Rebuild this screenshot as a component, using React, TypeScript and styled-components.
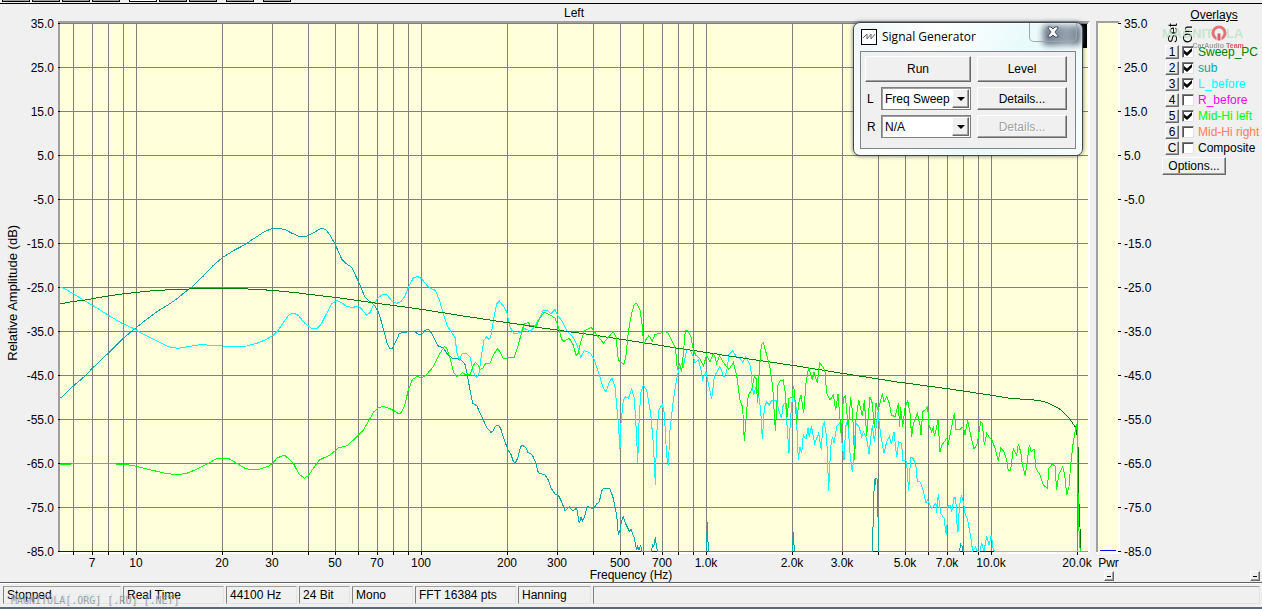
import React, { useState } from "react";
import styled, { createGlobalStyle } from "styled-components";

const GlobalStyle = createGlobalStyle`
  *, *::before, *::after { box-sizing: border-box; }
  html, body { margin: 0; background: #f0f0f0; }
  body, button, select, input {
    font-family: "Liberation Sans", Arial, sans-serif;
    font-size: 12px;
    color: #000;
  }
`;

/* ---------- page frame ---------- */

const Page = styled.div`
  position: relative;
  display: flex;
  flex-direction: column;
  min-height: 100vh;
  overflow: hidden;
  background: #f0f0f0;
`;

const Toolbar = styled.div`
  display: flex;
  gap: 2px;
  height: 4px;
  padding: 0 2px 1px;
  border-bottom: 1px solid #000;
`;

const ToolButton = styled.button<{ $active?: boolean; $gap?: boolean }>`
  width: 28px;
  height: 2px;
  padding: 0;
  margin-left: ${(p) => (p.$gap ? 7 : 0)}px;
  border: 1px solid #000;
  border-top: 0;
  background: ${(p) => (p.$active ? "#fff" : "#a0a0a0")};
`;

const Main = styled.main`
  flex: 1;
  display: grid;
  grid-template-columns: 60px minmax(0, 1fr) 6px 24px 42px 100px;
  grid-template-rows: 17px minmax(400px, 1fr) 30px;
`;

const ChartTitle = styled.h1`
  grid-area: 1 / 2;
  margin: 0;
  padding: 2px 2px 0 0;
  text-align: center;
  font-size: 12px;
  font-weight: 400;
  line-height: 14px;
`;

const LeftAxis = styled.svg`
  grid-area: 2 / 1;
  width: 100%;
  height: calc(100% - 2px);
  margin-top: 2px;
  overflow: visible;
`;

const RightAxis = styled(LeftAxis)`
  grid-area: 2 / 5;
`;

const BottomAxis = styled.svg`
  grid-area: 3 / 2;
  width: calc(100% - 2px);
  height: 30px;
  overflow: visible;
`;

const PlotFrame = styled.div`
  grid-area: 2 / 2;
  min-height: 0;
  border-top: 2px solid #a0a0a0;
  border-right: 2px solid #fff;
  background: #ffffdc;
`;

const PlotSvg = styled.svg`
  display: block;
  width: 100%;
  height: 100%;
`;

const Meter = styled.div`
  grid-area: 2 / 4;
  display: flex;
  align-items: flex-end;
  padding: 0 2px 1px;
  border: 2px solid #a0a0a0;
  border-right-color: #fff;
  border-bottom: 0;
  background: #ffffdc;
`;

const MeterLevel = styled.div`
  flex: 1;
  height: 1px;
  background: #00f;
`;

const MeterFoot = styled.div`
  grid-area: 3 / 4;
  display: flex;
  flex-direction: column;
  align-items: center;
  border-top: 2px solid #fff;
  line-height: 16px;
  padding: 1px 0 0 1px;
`;

const OverlayFoot = styled.div`
  grid-area: 3 / 6;
  display: flex;
  justify-content: flex-end;
  align-items: flex-end;
  padding: 0 2px 1px 0;
`;

const Raised = styled.button`
  padding: 0;
  background: #f0f0f0;
  border: 1px solid;
  border-color: #fff #696969 #696969 #fff;
  box-shadow: inset -1px -1px 0 #a0a0a0;
  white-space: nowrap;
`;

const MinusButton = styled(Raised)`
  display: flex;
  align-items: center;
  justify-content: center;
  flex: none;
  width: 10px;
  height: 10px;

  &::before {
    content: "";
    width: 4px;
    height: 1px;
    background: #000;
  }
`;

/* ---------- overlays panel ---------- */

const Overlays = styled.aside`
  grid-area: 1 / 6 / 3 / 7;
  position: relative;
  padding-top: 4px;
`;

const OverlayTitle = styled.h2`
  margin: 0 0 1px;
  padding-left: 4px;
  text-align: center;
  font-size: 12px;
  font-weight: 400;
  line-height: 14px;
  text-decoration: underline;
`;

const ColumnHeads = styled.div`
  display: flex;
  height: 20px;
  padding-left: 4px;
  gap: 1px;
`;

const ColumnHead = styled.span`
  width: 14px;
  writing-mode: vertical-rl;
  transform: rotate(180deg);
  font-size: 13px;
  line-height: 14px;
`;

const OverlayList = styled.ul`
  margin: 0;
  padding: 1px 0 0 3px;
  list-style: none;
`;

const OverlayRow = styled.li`
  display: flex;
  align-items: center;
  gap: 3px;
  height: 16px;
`;

const SetButton = styled(Raised)`
  width: 14px;
  height: 14px;
  line-height: 12px;
`;

const CheckLabel = styled.label<{ $color: string }>`
  display: flex;
  align-items: center;
  gap: 4px;
  color: ${(p) => p.$color};
  white-space: nowrap;
`;

const Check = styled.input`
  appearance: none;
  display: grid;
  place-items: center;
  width: 12px;
  height: 12px;
  margin: 0;
  background: #fff;
  border: 1px solid;
  border-color: #808080 #e3e3e3 #e3e3e3 #808080;
  box-shadow: inset 1px 1px 0 #505050;

  &:checked::after {
    content: "";
    width: 8px;
    height: 8px;
    background: #000;
    clip-path: polygon(0 25%, 38% 55%, 100% 0, 100% 42%, 38% 100%, 0 70%);
  }
`;

const OptionsButton = styled(Raised)`
  width: 64px;
  height: 18px;
  margin-top: 1px;
  line-height: 14px;
`;

const Logo = styled.svg`
  position: absolute;
  top: 13px;
  left: 0;
  width: 84px;
  height: 34px;
  overflow: visible;
  pointer-events: none;
`;

/* ---------- signal generator window ---------- */

const Dialog = styled.section`
  position: absolute;
  top: 22px;
  right: 179px;
  width: 230px;
  height: 134px;
  padding: 0 6px;
  border: 1px solid #3c4650;
  border-radius: 7px;
  background: linear-gradient(115deg, #eef6f7, #fff 30%, #e9fafb 62%, #f7fdfd);
  box-shadow: inset 0 0 0 1px #fff, 0 0 4px #0008;
`;

const DialogBackdrop = styled.div`
  position: absolute;
  top: 24px;
  right: 175px;
  width: 10px;
  height: 24px;
  background: #000;
`;

const DialogBar = styled.header`
  display: flex;
  align-items: center;
  gap: 5px;
  height: 28px;
  padding-left: 1px;
`;

const DialogTitle = styled.h2`
  margin: 0;
  font-family: "Open Sans", "Noto Sans", sans-serif;
  font-size: 12px;
  font-weight: 400;
  line-height: 16px;
`;

const CloseShade = styled.div`
  position: absolute;
  top: 2px;
  right: 1px;
  width: 38px;
  height: 20px;
  border-radius: 4px;
  background: linear-gradient(90deg, #4f5f70, #8795a4 65%, #566473);
  filter: blur(3px);
`;

const CloseButton = styled.button`
  position: absolute;
  top: 0;
  right: 5px;
  width: 48px;
  height: 19px;
  padding: 0;
  border: 1px solid #9aa8b4;
  border-top: 0;
  border-radius: 0 0 5px 5px;
  background: #ffffff26;

  svg { display: block; margin: 0 auto; }
`;

const DialogBody = styled.div`
  display: grid;
  grid-template-columns: 16px 90px 90px;
  grid-template-rows: 26px 23px 23px;
  row-gap: 5px;
  height: 98px;
  padding: 4px;
  border: 1px solid #808488;
  background: #f0f0f0;
  align-items: center;
`;

const PushButton = styled(Raised)<{ $wide?: boolean }>`
  grid-column: ${(p) => (p.$wide ? "1 / 3" : "3")};
  height: 100%;
  margin-left: ${(p) => (p.$wide ? 0 : 6)}px;
  margin-right: ${(p) => (p.$wide ? 0 : -6)}px;

  &:disabled {
    color: #a0a0a0;
    text-shadow: 1px 1px 0 #fff;
  }
`;

const ChannelLabel = styled.label`
  padding-left: 2px;
`;

const SelectBox = styled.div`
  position: relative;
  height: 100%;
`;

const Select = styled.select`
  appearance: none;
  width: 100%;
  height: 100%;
  padding: 0 18px 0 3px;
  border: 1px solid #808080;
  border-radius: 0;
  background: #fff;
  box-shadow: inset 1px 1px 0 #a0a0a0;
`;

const Arrow = styled.span`
  position: absolute;
  top: 2px;
  right: 2px;
  bottom: 2px;
  display: grid;
  place-items: center;
  width: 17px;
  background: #f0f0f0;
  border: 1px solid;
  border-color: #fff #696969 #696969 #fff;
  box-shadow: inset -1px -1px 0 #a0a0a0;
  pointer-events: none;

  &::after {
    content: "";
    border: 4px solid transparent;
    border-top-color: #000;
    border-bottom: 0;
  }
`;

/* ---------- status bar ---------- */

const StatusBar = styled.footer`
  position: relative;
  display: flex;
  gap: 2px;
  padding: 3px 2px 3px 3px;
  border-top: 1px solid #606060;
  border-bottom: 2px solid #5b6875;
  box-shadow: inset 0 1px 0 #fff;
`;

const StatusCell = styled.div<{ $width?: number }>`
  flex: ${(p) => (p.$width ? `0 0 ${p.$width}px` : "1")};
  height: 18px;
  padding-left: 3px;
  border: 1px solid;
  border-color: #a0a0a0 #e3e3e3 #e3e3e3 #808080;
  line-height: 16px;
  white-space: nowrap;
`;

const SiteMark = styled.span`
  position: absolute;
  left: 11px;
  bottom: 0;
  font: 10px/12px "DejaVu Sans Mono", monospace;
  color: #8a8a8acc;
  text-shadow: 1px -2px 0 #a8dbe680;
  white-space: nowrap;
  pointer-events: none;
`;

/* ---------- chart data ---------- */

const LEFT = 60;
const TOP = 23;
const WIDTH = 1028;
const HEIGHT = 529;

const freqX = (f: number) => Math.round(136 + 285 * Math.log10(f / 10));
const share = (v: number, of: number) => `${(v / of) * 100}%`;

const GRID = [1, 10, 100, 1000, 10000]
  .flatMap((d) => [1, 2, 3, 4, 5, 6, 7, 8, 9].map((n) => n * d))
  .filter((f) => f >= 6 && f <= 20000);

const FREQ_LABELS: [number, string][] = [
  [7, "7"], [10, "10"], [20, "20"], [30, "30"], [50, "50"], [70, "70"],
  [100, "100"], [200, "200"], [300, "300"], [500, "500"], [700, "700"],
  [1000, "1.0k"], [2000, "2.0k"], [3000, "3.0k"], [5000, "5.0k"],
  [7000, "7.0k"], [10000, "10.0k"], [20000, "20.0k"],
];

const LEVELS = Array.from({ length: 13 }, (_, i) => 35 - i * 10);

// Each trace is a list of sections: an origin in plot units, then x,y pairs
// on a grid three times finer.
type Section = [number, number, string];

const SWEEP: Section[] = [
  [50, 210, "28,280 40,280 70,274 100,271 150,262 200,254 260,247 320,241 400,238 450,235 560,235 630,239 668,241 748,249"],
  [290, 210, "30,250 135,262 262,280 395,298 520,318 652,338 718,347"],
  [530, 290, "0,109 190,135 340,158 445,175 568,193"],
  [720, 320, "0,104 217,136 367,160 475,177 538,187"],
  [900, 360, "0,67 142,86 275,106 330,115 415,121 445,129 478,146 508,175 528,204 533,240 535,282 537,430 540,500 541,573"],
];

const SUB: Section[] = [
  [50, 210, "28,563 36,562 44,553 60,537 71,527 90,511 106,497 127,475 160,443 180,425 200,405 220,385 240,368 260,352 290,328 325,302 350,287 380,267 400,250 425,232 460,198 490,166 517,143 550,122 583,105 605,90 640,67 667,55 690,55 710,61 720,67"],
  [290, 210, "0,67 25,78 50,78 75,66 93,55 107,58 120,75 135,102 155,147 165,158 185,172 205,214 225,262 240,275 252,284 265,305 275,338 285,375 292,402 300,416 306,417 312,405 322,385 328,370 355,365 375,365 385,373 395,373 405,361 415,358 425,370 435,390 443,407 460,414 472,432 487,445 510,448 518,455 525,463 531,490 540,540 548,580 560,587 570,608 580,630 590,652 603,667 610,662 617,648 624,645 632,655 642,687 655,722 664,735 668,750 675,760 683,745 692,710 698,706 708,714 714,728"],
  [530, 290, "0,490 8,497 16,515 25,548 45,555 55,570 62,592 75,612 83,612 95,635 105,663 118,650 128,662 140,655 148,700 153,680 158,694 165,675 172,648 190,657 200,642 208,635 215,603 222,594 240,596 250,625 260,675 265,733 270,722 274,697 280,680 285,697 298,724 303,718 312,742 320,780 323,770 327,780 332,765 335,784 365,784 367,765 371,770 376,740 380,775 383,784 529,784 532,697 535,784"],
  [720, 320, "217,694 220,637 223,694 457,694 458,660 463,478 466,496 468,475 473,478 474,590 476,694"],
  [900, 360, "178,574 182,553 187,560 189,574 215,574"],
];

const L_BEFORE: Section[] = [
  [50, 210, "28,233 38,233 68,250 100,270 127,286 160,306 180,319 220,342 250,355 275,370 300,382 330,397 355,410 385,415 420,409 455,403 480,406 517,408 550,410 590,408 620,400 645,390 668,377 685,360 705,330 718,314"],
  [290, 210, "0,313 10,309 25,316 45,340 65,355 80,357 92,345 110,310 125,282 140,271 155,278 170,290 188,292 205,289 215,297 230,316 240,308 252,282 265,262 280,253 290,254 305,272 320,280 333,275 345,258 357,228 370,204 382,199 395,206 412,228 425,237 436,241 448,270 460,312 472,348 485,368 495,382 501,430 508,450 517,430 530,430 541,443 550,487 560,502 567,490 573,445 582,390 590,380 596,388 602,382 612,320 620,282 628,273 640,288 650,305 660,350 672,372 690,368 702,355 718,362"],
  [530, 290, "0,124 10,115 25,90 40,62 52,62 62,71 75,58 82,75 95,92 110,122 130,143 143,170 152,201 163,182 180,188 192,207 205,245 220,295 228,306 238,275 246,265 255,290 265,400 270,476 273,400 280,330 287,320 295,325 305,297 313,325 320,440 323,520 327,400 332,310 340,286 350,300 362,370 370,460 376,584 380,430 387,360 397,343 403,370 410,500 415,524 420,420 430,330 440,265 446,240 455,222 460,230 470,178 480,180 490,200 495,218 505,210 512,235 518,268 528,245 535,280 545,328 553,260 568,232"],
  [720, 320, "0,140 12,172 20,155 27,103 38,92 50,112 60,115 68,127 77,110 85,125 92,140 97,200 101,225 108,200 115,220 122,270 127,358 133,265 140,245 148,255 155,240 170,240 175,265 184,295 190,253 197,250 200,300 207,398 211,300 217,235 222,230 228,260 235,420 240,380 245,400 250,345 258,358 264,325 268,352 274,318 284,370 296,340 304,390 308,320 313,308 320,350 326,512 332,380 337,350 342,370 350,320 360,308 364,350 372,420 377,320 383,300 390,400 397,457 402,400 407,310 417,320 425,350 430,335 440,355 447,402 457,315 463,365 474,277 482,345 492,400 500,365 508,350 514,372 522,335 530,412 536,365 545,370 548,420 557,420 560,430 566,514 572,412 580,415 588,440 592,485"],
  [900, 360, "60,365 68,385 78,430 82,420 95,445 108,430 109,460 115,402 122,460 132,475 138,520 140,525 143,440 150,435 155,455 162,415 167,412 172,510 174,515 178,440 184,405 190,425 195,460 203,480 212,530 218,574 227,560 232,574 240,574 245,548 252,574 260,528 267,555 274,525 280,570 285,574 541,574"],
];

const MID_LEFT: Section[] = [
  [50, 210, "28,763 62,763 66,760 195,760 200,763 225,763 260,769 300,779 345,790 380,794 410,790 440,778 475,760 500,746 535,745 560,760 585,775 605,780 630,777 655,769 668,760 680,745 695,738 705,737 715,745"],
  [290, 210, "0,750 10,760 27,792 43,805 55,797 70,775 88,750 120,735 145,714 172,707 190,690 205,675 220,660 235,635 250,607 265,593 280,589 295,594 312,602 325,611 332,609 343,590 355,540 367,509 382,499 395,505 410,493 430,470 448,433 463,410 470,413 480,445 490,485 500,500 510,496 517,488 527,494 540,495 548,470 556,457 563,463 570,478 578,475 587,460 600,459 610,436 622,416 630,425 640,447 655,443 672,443 685,405 698,355 705,340 715,338"],
  [530, 290, "0,105 18,110 28,88 42,67 55,72 75,84 85,110 95,148 102,154 118,145 130,165 138,196 145,190 153,152 163,122 183,112 193,125 203,138 220,160 232,145 250,125 258,140 265,210 282,223 288,195 295,125 305,70 313,43 320,40 330,60 337,110 341,165 347,150 357,137 367,153 375,133 390,130 405,124 415,130 430,160 437,180 442,240 448,222 455,245 460,190 466,122 473,120 483,142 490,180 497,195 510,207 520,228 530,195 540,215 550,190 555,200 560,220 568,198"],
  [720, 320, "0,110 12,130 27,148 40,128 50,165 60,240 68,262 73,364 80,270 85,225 95,210 103,168 108,175 113,250 118,150 124,75 130,68 140,105 150,145 158,200 166,332 174,195 180,182 190,180 196,220 201,292 207,235 217,230 220,198 223,210 230,312 236,250 243,225 251,280 258,190 266,142 277,180 282,155 292,190 299,128 310,143 315,155 320,220 330,240 340,225 347,270 354,222 364,350 370,235 376,228 385,325 392,232 398,280 404,420 408,300 416,240 427,288 433,240 440,348 450,230 457,250 463,325 468,250 474,270 480,250 487,220 492,245 500,230 508,250 514,285 525,290 535,250 539,322 542,262 548,320 555,265 563,242 570,280 575,350 580,310 592,280"],
  [900, 360, "60,195 63,225 68,155 75,150 83,140 87,195 95,215 100,203 103,228 108,210 114,178 120,275 126,255 140,235 145,250 155,200 163,160 168,210 180,208 190,200 195,225 203,180 212,225 222,268 232,250 242,185 247,190 253,255 260,220 268,232 276,240 285,265 295,303 302,265 312,275 320,300 325,332 332,330 340,265 350,285 355,252 362,275 367,315 376,347 388,255 394,275 402,268 408,325 420,345 430,375 442,385 447,325 457,312 465,318 470,390 476,345 480,335 488,320 494,345 500,405 507,380 512,315 518,260 522,235 526,210 530,192 532,225 534,400 536,487 539,560 543,573 560,573"],
];

const toPoints = (sections: Section[]) =>
  sections
    .flatMap(([ox, oy, pts]) =>
      pts.split(" ").map((p) => {
        const [x, y] = p.split(",").map(Number);
        return `${(ox + x / 3).toFixed(2)},${(oy + y / 3).toFixed(2)}`;
      })
    )
    .join(" ");

const TRACES = [
  { color: "#00a8a8", data: SUB },
  { color: "#00ffff", data: L_BEFORE },
  { color: "#008000", data: SWEEP },
  { color: "#00ff00", data: MID_LEFT },
];

function Plot() {
  return (
    <PlotFrame>
      <PlotSvg
        viewBox={`${LEFT} ${TOP} ${WIDTH} ${HEIGHT}`}
        preserveAspectRatio="none"
        shapeRendering="crispEdges"
        role="img"
        aria-label="Spectrum, left channel"
      >
        <g stroke="#808080">
          {LEVELS.map((l, i) => (
            <line key={l} x1={LEFT} x2={LEFT + WIDTH} y1={TOP + 0.5 + i * 44} y2={TOP + 0.5 + i * 44} />
          ))}
          {GRID.map((f) => (
            <line key={f} x1={freqX(f) + 0.5} x2={freqX(f) + 0.5} y1={TOP} y2={TOP + HEIGHT} />
          ))}
        </g>
        <line x1={LEFT} x2={LEFT + WIDTH - 10} y1={551.5} y2={551.5} stroke="#0000ff" />
        {TRACES.map((t) => (
          <polyline
            key={t.color}
            points={toPoints(t.data)}
            fill="none"
            stroke={t.color}
            vectorEffect="non-scaling-stroke"
          />
        ))}
      </PlotSvg>
    </PlotFrame>
  );
}

function LevelTicks({ x, width, textX, anchor }: { x: number; width: number; textX: number; anchor: "start" | "end" }) {
  return (
    <>
      {LEVELS.map((l, i) => (
        <React.Fragment key={l}>
          <rect x={x} y={share(i * 44, HEIGHT)} width={width} height="1" shapeRendering="crispEdges" />
          <text x={textX} y={share(i * 44, HEIGHT)} dy="5" textAnchor={anchor}>
            {l.toFixed(1)}
          </text>
        </React.Fragment>
      ))}
    </>
  );
}

const OVERLAYS = [
  { id: "1", name: "Sweep_PC", color: "#008000", on: true },
  { id: "2", name: "sub", color: "#00a8a8", on: true },
  { id: "3", name: "L_before", color: "#00ffff", on: true },
  { id: "4", name: "R_before", color: "#ff00ff", on: false },
  { id: "5", name: "Mid-Hi left", color: "#00ff00", on: true },
  { id: "6", name: "Mid-Hi right", color: "#ff8050", on: false },
  { id: "C", name: "Composite", color: "#000000", on: false },
];

function OverlayPanel() {
  const [on, setOn] = useState<Record<string, boolean>>(
    Object.fromEntries(OVERLAYS.map((o) => [o.id, o.on]))
  );
  return (
    <Overlays>
      <OverlayTitle>Overlays</OverlayTitle>
      <ColumnHeads>
        <ColumnHead>Set</ColumnHead>
        <ColumnHead>On</ColumnHead>
      </ColumnHeads>
      <OverlayList>
        {OVERLAYS.map((o) => (
          <OverlayRow key={o.id}>
            <SetButton type="button">{o.id}</SetButton>
            <CheckLabel $color={o.color}>
              <Check
                type="checkbox"
                checked={on[o.id]}
                onChange={(e) => setOn({ ...on, [o.id]: e.target.checked })}
              />
              {o.name}
            </CheckLabel>
          </OverlayRow>
        ))}
      </OverlayList>
      <OptionsButton type="button">Options...</OptionsButton>
      <Logo aria-hidden="true">
        <g fontFamily="'Liberation Sans', sans-serif" fontWeight="700">
          <g fontSize="13" fill="#b4e2be" opacity="0.7">
            <text x="0" y="21">MAGNIT</text>
            <text x="64" y="21">LA</text>
          </g>
          <circle cx="57" cy="16" r="6" fill="none" stroke="#e45a64" strokeWidth="3" opacity="0.85" />
          <path d="M55 16h4v8h-4z" fill="#e45a64" stroke="#f0f0f0" />
          <text x="62" y="31" textAnchor="end" fontSize="7" fill="#8c8c8c" opacity="0.8">CarAudio</text>
          <text x="64" y="31" fontSize="7" fill="#e04450" opacity="0.9">Team</text>
        </g>
      </Logo>
    </Overlays>
  );
}

function SignalGenerator() {
  return (
    <>
      <DialogBackdrop />
      <Dialog aria-label="Signal Generator">
        <CloseShade />
        <DialogBar>
          <svg width="16" height="16" viewBox="0 0 16 16" aria-hidden="true">
            <rect x="0.5" y="0.5" width="15" height="15" fill="#fff" stroke="#000" />
            <path d="M2 9 6 5V10L10 5V10L14 5" fill="none" stroke="#666" />
          </svg>
          <DialogTitle>Signal Generator</DialogTitle>
          <CloseButton type="button" aria-label="Close">
            <svg width="14" height="12" viewBox="0 0 14 12">
              <path d="M2 1h3l2 2 2-2h3v1L9 6l3 4v1H9L7 9l-2 2H2v-1l3-4-3-4z" fill="#fff" stroke="#465260" />
            </svg>
          </CloseButton>
        </DialogBar>
        <DialogBody>
          <PushButton type="button" $wide>Run</PushButton>
          <PushButton type="button">Level</PushButton>
          <ChannelLabel htmlFor="left-signal">L</ChannelLabel>
          <SelectBox>
            <Select id="left-signal" defaultValue="Freq Sweep">
              <option>Freq Sweep</option>
              <option>N/A</option>
            </Select>
            <Arrow />
          </SelectBox>
          <PushButton type="button">Details...</PushButton>
          <ChannelLabel htmlFor="right-signal">R</ChannelLabel>
          <SelectBox>
            <Select id="right-signal" defaultValue="N/A">
              <option>Freq Sweep</option>
              <option>N/A</option>
            </Select>
            <Arrow />
          </SelectBox>
          <PushButton type="button" disabled>Details...</PushButton>
        </DialogBody>
      </Dialog>
    </>
  );
}

const TOOLS = [0, 1, 2, 3, 4, 5, 6, 7, 8];

const STATUS: [string, number][] = [
  ["Stopped", 118], ["Real Time", 101], ["44100 Hz", 71], ["24 Bit", 51],
  ["Mono", 61], ["FFT 16384 pts", 101], ["Hanning", 73],
];

export default function App() {
  return (
    <Page>
      <GlobalStyle />
      <Toolbar>
        {TOOLS.map((t) => (
          <ToolButton key={t} type="button" aria-label={`Tool ${t + 1}`} $active={t === 4} $gap={t === 4 || t > 6} />
        ))}
      </Toolbar>
      <Main>
        <ChartTitle>Left</ChartTitle>
        <LeftAxis>
          <rect x="58" y="-2" width="2" height="100%" fill="#a0a0a0" />
          <rect x="58" y="0" width="2" height="100%" fill="#a0a0a0" />
          <LevelTicks x={58} width={3} textX={54} anchor="end" />
          <svg x="17" y="51%" overflow="visible">
            <text transform="rotate(-90)" textAnchor="middle" fontSize="13">
              Relative Amplitude (dB)
            </text>
          </svg>
        </LeftAxis>
        <Plot />
        <BottomAxis>
          <rect width="100%" height="2" fill="#fff" />
          {GRID.map((f) => (
            <rect key={f} x={share(freqX(f) - LEFT, WIDTH)} y="0" width="1" height="3" shapeRendering="crispEdges" />
          ))}
          {FREQ_LABELS.map(([f, label]) => (
            <text key={f} x={share(freqX(f) - LEFT, WIDTH)} y="15" textAnchor="middle">
              {label}
            </text>
          ))}
          <text x={share(571, WIDTH)} y="27" textAnchor="middle">Frequency (Hz)</text>
        </BottomAxis>
        <Meter>
          <MeterLevel />
        </Meter>
        <RightAxis>
          <LevelTicks x={-2} width={3} textX={4} anchor="start" />
        </RightAxis>
        <MeterFoot>
          Pwr
          <MinusButton type="button" aria-label="Collapse meter" />
        </MeterFoot>
        <OverlayPanel />
        <OverlayFoot>
          <MinusButton type="button" aria-label="Collapse overlays" />
        </OverlayFoot>
      </Main>
      <StatusBar>
        {STATUS.map(([text, width]) => (
          <StatusCell key={text} $width={width}>{text}</StatusCell>
        ))}
        <StatusCell />
        <SiteMark>MAGNITOLA[.ORG] [.RU] [.NET]</SiteMark>
      </StatusBar>
      <SignalGenerator />
    </Page>
  );
}
